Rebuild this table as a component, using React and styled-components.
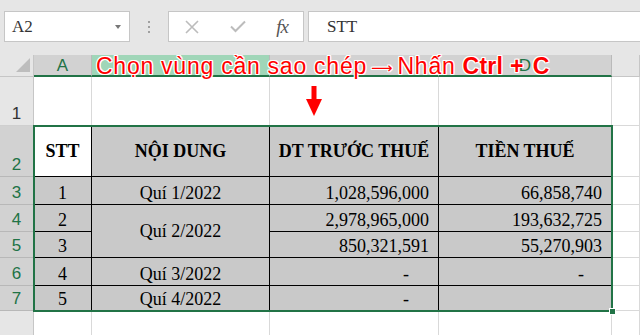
import React from 'react';
import styled, { createGlobalStyle } from 'styled-components';

const GREEN = '#217346';
const GRID = '#d9d9d9';
const TABLE_BG = '#c9c9c9';

const GlobalStyle = createGlobalStyle`
  html, body { margin: 0; padding: 0; background: #fff; overflow: hidden; }
  * { box-sizing: border-box; }
`;

const Page = styled.div`
  width: 640px;
  height: 335px;
  display: flex;
  flex-direction: column;
  overflow: hidden;
`;

// Formula bar
const Toolbar = styled.div`
  height: 55px;
  flex: none;
  display: flex;
  align-items: flex-start;
  padding: 11px 0 0 4px;
  background: #e6e6e6;
`;

const NameBox = styled.div`
  width: 126px;
  height: 31px;
  display: flex;
  align-items: center;
  justify-content: space-between;
  padding: 0 7px 0 7px;
  background: #fff;
  border: 1px solid #c6c6c6;
  font: 17px 'Liberation Serif', serif;
  color: #333;
`;

const Caret = styled.span`
  width: 0;
  height: 0;
  border-left: 3.5px solid transparent;
  border-right: 3.5px solid transparent;
  border-top: 4px solid #777;
  margin-right: 1px;
`;

const Grip = styled.div`
  width: 38px;
  height: 31px;
  display: flex;
  flex-direction: column;
  align-items: center;
  justify-content: center;
  gap: 3px;

  & > span {
    width: 2px;
    height: 2px;
    background: #a0a0a0;
  }
`;

const FxBox = styled.div`
  width: 136px;
  height: 31px;
  display: flex;
  align-items: center;
  background: #fff;
  border: 1px solid #c6c6c6;
  margin-right: 4px;
`;

const FxButton = styled.div`
  width: ${({ $w }) => $w}px;
  display: flex;
  justify-content: center;
  align-items: center;
  color: ${({ $on }) => ($on ? '#555' : '#bcbcbc')};
`;

const FxLabel = styled.span`
  font: italic 19px 'Liberation Serif', serif;
  letter-spacing: -1px;
  color: #555;
`;

const FormulaInput = styled.div`
  flex: 1;
  height: 31px;
  display: flex;
  align-items: center;
  padding-left: 18px;
  background: #fff;
  border: 1px solid #c6c6c6;
  border-right: none;
  font: 17px 'Liberation Serif', serif;
  color: #333;
`;

// Sheet
const Sheet = styled.div`
  flex: none;
  display: grid;
  grid-template-columns: 34px 58px 178px 169px 173px 1fr;
  grid-template-rows: 22px 49px 51px 28px 27px 26px 28px 25px 30px;
`;

const place = ({ $r, $c, $span }) => `
  grid-row: ${$r}${$span ? ` / span ${$span}` : ''};
  grid-column: ${$c};
`;

const Corner = styled.div`
  grid-row: 1;
  grid-column: 1;
  background: #e6e6e6;
  border-right: 1px solid #c6c6c6;
  border-bottom: 1px solid #c6c6c6;
  position: relative;

  &::after {
    content: '';
    position: absolute;
    right: 3px;
    bottom: 4px;
    width: 0;
    height: 0;
    border-left: 14px solid transparent;
    border-bottom: 14px solid #bdbdbd;
  }
`;

const ColHead = styled.div`
  ${place}
  background: ${({ $bg }) => $bg || '#d2d2d2'};
  border-right: 1px solid ${({ $sel }) => ($sel ? '#bababa' : '#c6c6c6')};
  border-bottom: ${({ $sel }) => ($sel ? `2px solid ${GREEN}` : '1px solid #c6c6c6')};
  display: flex;
  align-items: center;
  justify-content: center;
  font: 17px 'Liberation Sans', Arial, sans-serif;
  color: ${GREEN};
  padding-top: 1px;
`;

const RowHead = styled.div`
  ${place}
  background: ${({ $sel }) => ($sel ? '#d2d2d2' : '#e6e6e6')};
  border-right: 1px solid #c6c6c6;
  border-bottom: 1px solid ${({ $sel }) => ($sel ? '#b8b8b8' : '#cfcfcf')};
  display: flex;
  align-items: flex-end;
  justify-content: center;
  padding-bottom: 1px;
  font: 17px 'Liberation Sans', Arial, sans-serif;
  line-height: 20px;
  color: ${({ $sel }) => ($sel ? GREEN : '#333')};
`;

const Cell = styled.div`
  ${place}
  min-width: 0;
  background: ${({ $table, $active }) => ($active ? '#fff' : $table ? TABLE_BG : '#fff')};
  border-right: 1px solid ${({ $table }) => ($table ? '#000' : GRID)};
  border-bottom: 1px solid ${({ $table }) => ($table ? '#000' : GRID)};
  display: flex;
  align-items: ${({ $mid }) => ($mid ? 'center' : 'flex-end')};
  justify-content: ${({ $align }) =>
    $align === 'right' ? 'flex-end' : $align === 'center' ? 'center' : 'flex-start'};
  padding: 0 ${({ $pr }) => ($pr != null ? $pr : 9)}px 1px 4px;
  font: ${({ $bold }) => ($bold ? 'bold ' : '')}18px 'Liberation Serif', 'Times New Roman', serif;
  line-height: 20px;
  color: #000;
  white-space: nowrap;
`;

const Selection = styled.div`
  grid-column: 2 / 6;
  grid-row: 3 / 9;
  margin: -1px -1px -1px -1px;
  border: 2px solid ${GREEN};
  position: relative;
  pointer-events: none;
  z-index: 2;
`;

const FillHandle = styled.span`
  position: absolute;
  right: -5px;
  bottom: -5px;
  width: 7px;
  height: 7px;
  background: ${GREEN};
  border: 1px solid #fff;
`;

const Caption = styled.div`
  grid-column: 3 / 7;
  grid-row: 1;
  z-index: 3;
  display: flex;
  align-items: center;
  padding: 1px 0 0 4px;
  white-space: nowrap;
  font: 23px 'Liberation Sans', Arial, sans-serif;
  letter-spacing: 0.75px;
  color: #ff0000;
  text-shadow:
    1px 0 0 #fff, -1px 0 0 #fff, 0 1px 0 #fff, 0 -1px 0 #fff,
    1px 1px 0 #fff, -1px -1px 0 #fff, 1px -1px 0 #fff, -1px 1px 0 #fff;
  pointer-events: none;
`;

const Arrow = styled.span`
  font: 15px 'DejaVu Sans', sans-serif;
  letter-spacing: 0;
  margin: 2px 5px 0 4px;
`;

const Strong = styled.b`
  font-weight: bold;
  letter-spacing: 0.3px;
  margin-left: ${({ $gap }) => $gap || 0}px;
`;

const ArrowSlot = styled.div`
  grid-column: 4;
  grid-row: 2;
  z-index: 3;
  padding: 9px 0 0 36px;
  pointer-events: none;
`;

const tableRows = [
  { n: 3, a: '1', b: 'Quí 1/2022', c: '1,028,596,000', d: '66,858,740' },
  { n: 4, a: '2', b: 'Quí 2/2022', bSpan: 2, c: '2,978,965,000', d: '193,632,725' },
  { n: 5, a: '3', c: '850,321,591', d: '55,270,903' },
  { n: 6, a: '4', b: 'Quí 3/2022', c: '-', d: '-', dash: true },
  { n: 7, a: '5', b: 'Quí 4/2022', c: '-', d: '', dash: true },
];

const CloseIcon = () => (
  <svg width="14" height="14" viewBox="0 0 14 14">
    <path d="M1 1 L13 13 M13 1 L1 13" stroke="currentColor" strokeWidth="1.6" fill="none" />
  </svg>
);

const CheckIcon = () => (
  <svg width="16" height="13" viewBox="0 0 16 13">
    <path d="M1 6.5 L5.5 11 L15 1.5" stroke="currentColor" strokeWidth="2" fill="none" />
  </svg>
);

const DownArrow = () => (
  <svg width="16" height="30" viewBox="0 0 16 30">
    <rect x="5.5" y="0" width="5" height="14" fill="#ff0000" />
    <path d="M0 13 L16 13 L8 30 Z" fill="#ff0000" />
  </svg>
);

const blankRow = (r) =>
  [2, 3, 4, 5, 6].map((c) => <Cell key={`${r}-${c}`} $r={r} $c={c} />);

export default function App() {
  return (
    <Page>
      <GlobalStyle />
      <Toolbar>
        <NameBox>
          A2
          <Caret />
        </NameBox>
        <Grip>
          <span />
          <span />
          <span />
        </Grip>
        <FxBox>
          <FxButton $w={45}><CloseIcon /></FxButton>
          <FxButton $w={47}><CheckIcon /></FxButton>
          <FxButton $w={42} $on><FxLabel>fx</FxLabel></FxButton>
        </FxBox>
        <FormulaInput>STT</FormulaInput>
      </Toolbar>

      <Sheet>
        {/* column headers */}
        <Corner />
        <ColHead $r={1} $c={2} $sel>A</ColHead>
        <ColHead $r={1} $c={3} $sel $bg="#a0d6b8" />
        <ColHead $r={1} $c={4} $sel />
        <ColHead $r={1} $c={5} $sel>D</ColHead>
        <ColHead $r={1} $c={6} $bg="#e6e6e6" />

        {/* row 1 */}
        <RowHead $r={2} $c={1}>1</RowHead>
        {blankRow(2)}

        {/* row 2 - header */}
        <RowHead $r={3} $c={1} $sel>2</RowHead>
        <Cell $r={3} $c={2} $table $active $bold $mid $align="center" $pr={4}>STT</Cell>
        <Cell $r={3} $c={3} $table $bold $mid $align="center" $pr={4}>NỘI DUNG</Cell>
        <Cell $r={3} $c={4} $table $bold $mid $align="center" $pr={4}>DT TRƯỚC THUẾ</Cell>
        <Cell $r={3} $c={5} $table $bold $mid $align="center" $pr={4}>TIỀN THUẾ</Cell>
        <Cell $r={3} $c={6} />

        {tableRows.map((r) => {
          const gr = r.n + 1;
          return (
            <React.Fragment key={r.n}>
              <RowHead $r={gr} $c={1} $sel>{r.n}</RowHead>
              <Cell $r={gr} $c={2} $table $align="center" $pr={4}>{r.a}</Cell>
              {r.b !== undefined && (
                <Cell $r={gr} $c={3} $span={r.bSpan} $table $align="center" $pr={4} $mid={!!r.bSpan}>
                  {r.b}
                </Cell>
              )}
              <Cell $r={gr} $c={4} $table $align="right" $pr={r.dash ? 29 : 9}>{r.c}</Cell>
              <Cell $r={gr} $c={5} $table $align="right" $pr={r.dash ? 27 : 9}>{r.d}</Cell>
              <Cell $r={gr} $c={6} />
            </React.Fragment>
          );
        })}

        {/* row 8: number falls below the visible area */}
        <RowHead $r={9} $c={1} />
        {blankRow(9)}

        <Selection>
          <FillHandle />
        </Selection>

        <Caption>
          Chọn vùng cần sao chép<Arrow>⟶</Arrow>Nhấn
          <Strong $gap={7}>Ctrl +</Strong>
          <Strong $gap={9}>C</Strong>
        </Caption>

        <ArrowSlot>
          <DownArrow />
        </ArrowSlot>
      </Sheet>
    </Page>
  );
}
